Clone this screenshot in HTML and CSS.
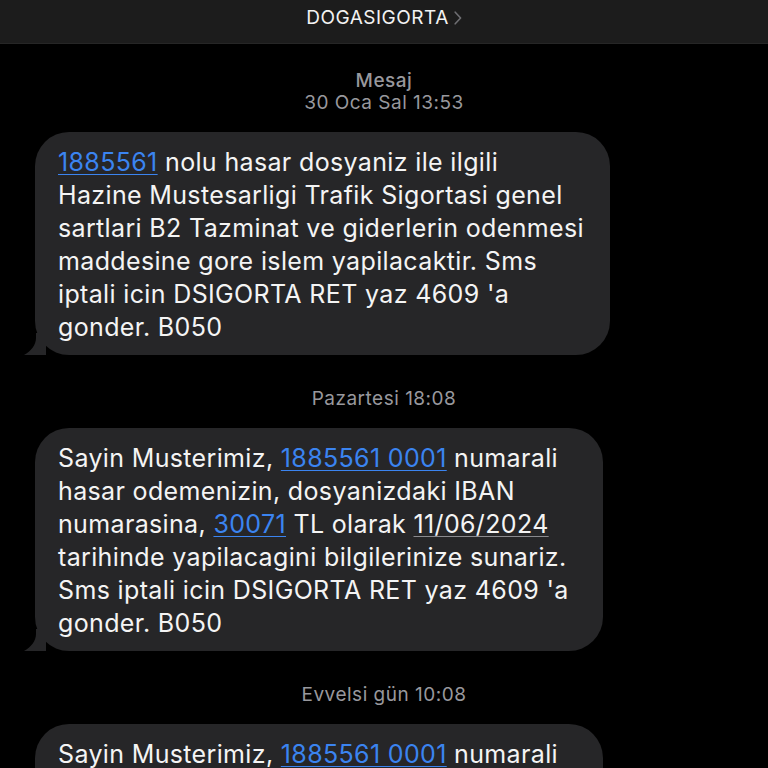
FILE: index.html
```html
<!DOCTYPE html>
<html lang="tr">
<head>
<meta charset="utf-8">
<title>DOGASIGORTA</title>
<link rel="stylesheet" href="styles.css">
</head>
<body>
<div class="screen">
  <header class="topbar">
    <span class="title">DOGASIGORTA</span>
    <svg class="chev" width="8" height="14" viewBox="0 0 8 14"><path d="M1.2 1.2 L6.6 7 L1.2 12.8" fill="none" stroke="#6e6e72" stroke-width="1.6" stroke-linecap="round" stroke-linejoin="round"/></svg>
  </header>

  <main class="thread">
    <div class="stamp"><div class="stamp-kind">Mesaj</div><div>30 Oca Sal 13:53</div></div>
    <div class="bubble b1">
      <p><a class="link">1885561</a> nolu hasar dosyaniz ile ilgili<br>Hazine Mustesarligi Trafik Sigortasi genel<br>sartlari B2 Tazminat ve giderlerin odenmesi<br>maddesine gore islem yapilacaktir. Sms<br>iptali icin DSIGORTA RET yaz 4609 'a<br>gonder. B050</p>
      <svg class="tail" width="22" height="22" viewBox="0 0 22 22"><path d="M12 0 L12 5 C12 12 7 18 0 22 L22 22 L22 0 Z" fill="#262628"/></svg>
    </div>

    <div class="stamp"><div>Pazartesi 18:08</div></div>
    <div class="bubble b2">
      <p>Sayin Musterimiz, <a class="link">1885561 0001</a> numarali<br>hasar odemenizin, dosyanizdaki IBAN<br>numarasina, <a class="link">30071</a> TL olarak <span class="date">11/06/2024</span><br>tarihinde yapilacagini bilgilerinize sunariz.<br>Sms iptali icin DSIGORTA RET yaz 4609 'a<br>gonder. B050</p>
      <svg class="tail" width="22" height="22" viewBox="0 0 22 22"><path d="M12 0 L12 5 C12 12 7 18 0 22 L22 22 L22 0 Z" fill="#262628"/></svg>
    </div>

    <div class="stamp"><div>Evvelsi gün 10:08</div></div>
    <div class="bubble b2 last">
      <p>Sayin Musterimiz, <a class="link">1885561 0001</a> numarali</p>
    </div>
  </main>
</div>
</body>
</html>
```

FILE: styles.css
```css
html, body {
  margin: 0;
  padding: 0;
  background: #000;
}
.screen {
  width: 768px;
  height: 768px;
  overflow: hidden;
  background: #000;
  font-family: Inter, "Liberation Sans", Arial, sans-serif;
  color: #f4f4f4;
}
.topbar {
  height: 44px;
  box-sizing: border-box;
  background: #1c1c1c;
  border-bottom: 1px solid #262626;
  display: flex;
  justify-content: center;
  align-items: flex-start;
  padding-top: 7px;
  gap: 5px;
}
.title {
  font-size: 19px;
  line-height: 22px;
  color: #f2f2f2;
  letter-spacing: 0.5px;
}
.chev {
  margin-top: 4px;
}
.thread {
  display: flex;
  flex-direction: column;
  align-items: flex-start;
  padding-top: 26px;
}
.stamp {
  align-self: stretch;
  text-align: center;
  font-size: 19px;
  line-height: 22px;
  letter-spacing: 0.5px;
  color: #98989d;
  margin-bottom: 18px;
}
.stamp-kind {
  font-weight: 500;
}
.bubble {
  position: relative;
  margin-left: 35px;
  background: #262628;
  border-radius: 34px;
  box-sizing: border-box;
  padding: 14px 18px 11px 23px;
  margin-bottom: 33px;
}
.b1 { width: 575px; }
.b2 { width: 568px; }
.last { padding-bottom: 60px; }
.bubble p {
  margin: 0;
  font-size: 25px;
  line-height: 33px;
  letter-spacing: 0.35px;
  color: #f4f4f4;
  white-space: nowrap;
}
.link {
  color: #3b84f0;
  text-decoration: underline;
  text-decoration-thickness: 1px;
  text-underline-offset: 3px;
}
.date {
  text-decoration: underline;
  text-decoration-color: #8a8a8e;
  text-decoration-thickness: 1px;
  text-underline-offset: 3px;
}
.tail {
  position: absolute;
  left: -11px;
  bottom: 0;
}
```
